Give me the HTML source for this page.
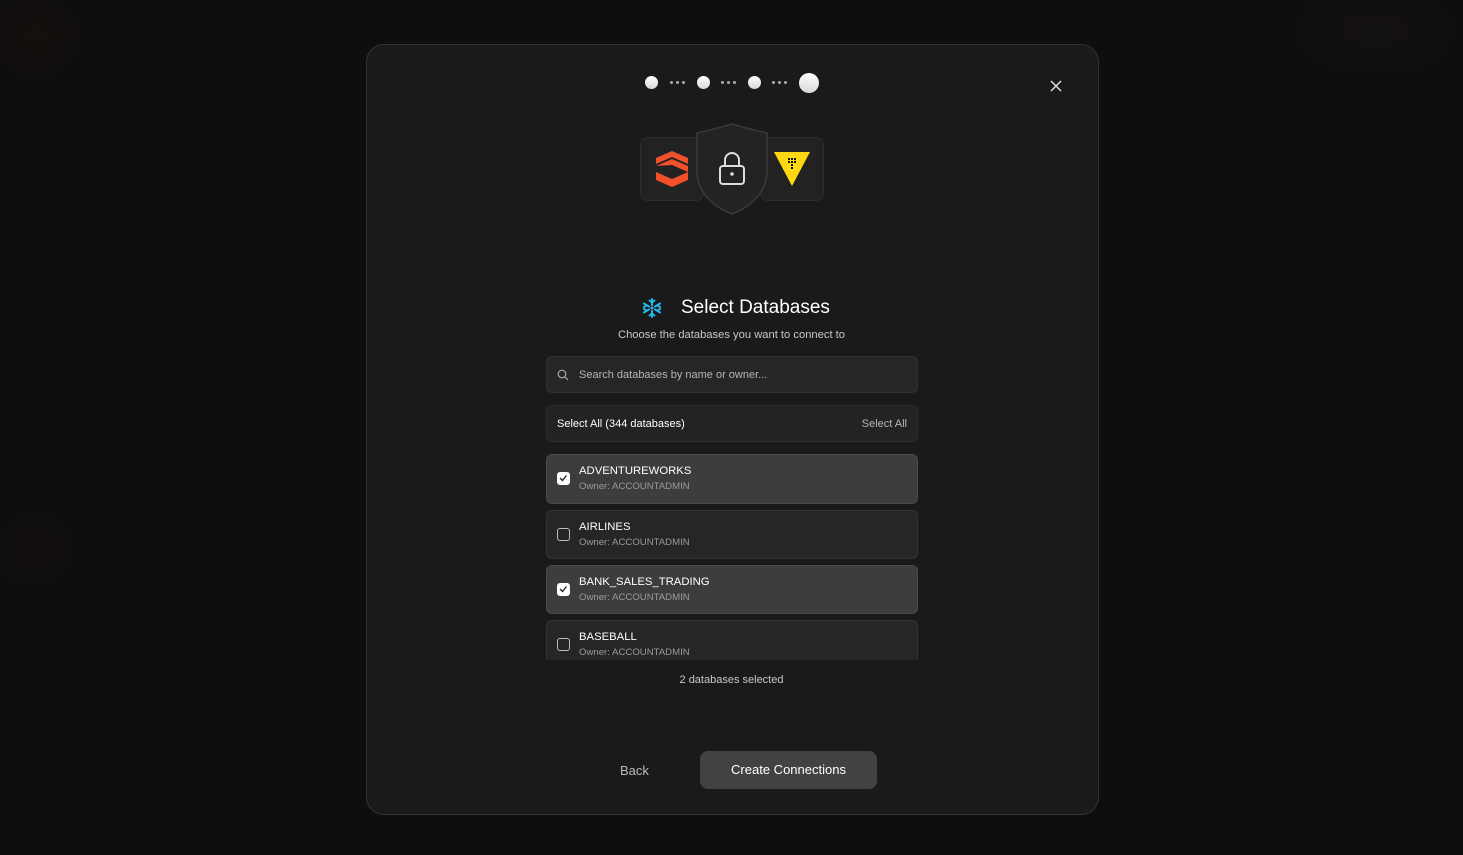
<!DOCTYPE html>
<html><head><style>
*{box-sizing:border-box;margin:0;padding:0}
body{width:1463px;height:855px;background:#0e0e0e;font-family:"Liberation Sans",sans-serif;position:relative;overflow:hidden;color:#fff}
.glow{position:absolute;border-radius:50%;filter:blur(25px);opacity:.5}
.modal{position:absolute;left:366px;top:44px;width:733px;height:771px;background:#1a1a1a;border:1px solid #333;border-radius:18px}
.dot{position:absolute;border-radius:50%;background:linear-gradient(#fff,#d8d8d8)}
.sd{position:absolute;width:3px;height:3px;border-radius:50%;background:#aaa}
.card{position:absolute;background:#222;border:1px solid #2e2e2e;border-radius:8px}
.row{position:absolute;left:546px;width:372px;border-radius:6px;border:1px solid #333}
.cb{position:absolute;left:10px;top:17px;width:13px;height:13px;border-radius:3px;border:1.5px solid #bbb}
.cb.on{background:#fff;border-color:#fff}
.nm{position:absolute;left:32px;top:10px;font-size:11.3px;color:#fff}
.ow{position:absolute;left:32px;top:26px;font-size:9.6px;color:#9a9a9a}
</style></head><body>
<div class="glow" style="left:10px;top:15px;width:50px;height:40px;background:#3a1a10"></div>
<div class="glow" style="left:1300px;top:10px;width:150px;height:40px;background:#221a16"></div>
<div class="glow" style="left:10px;top:530px;width:50px;height:40px;background:#2a1410"></div>
<div class="modal"></div>
<div class="dot" style="left:645px;top:76px;width:13px;height:13px"></div>
<div class="sd" style="left:670px;top:81px"></div><div class="sd" style="left:676px;top:81px"></div><div class="sd" style="left:682px;top:81px"></div>
<div class="dot" style="left:697px;top:76px;width:13px;height:13px"></div>
<div class="sd" style="left:721px;top:81px"></div><div class="sd" style="left:727px;top:81px"></div><div class="sd" style="left:733px;top:81px"></div>
<div class="dot" style="left:748px;top:76px;width:13px;height:13px"></div>
<div class="sd" style="left:772px;top:81px"></div><div class="sd" style="left:778px;top:81px"></div><div class="sd" style="left:784px;top:81px"></div>
<div class="dot" style="left:799px;top:73px;width:20px;height:20px"></div>
<svg style="position:absolute;left:1049px;top:79px" width="14" height="14"><path d="M2 2L12 12M12 2L2 12" stroke="#ddd" stroke-width="1.5"/></svg>
<div class="card" style="left:640px;top:137px;width:64px;height:64px"></div>
<svg style="position:absolute;left:655px;top:151px" width="34" height="36" viewBox="0 0 34 36"><g fill="#f0502a"><path d="M17 0L33 7V13L17 6L1 13V7Z"/><path d="M1 15L17 8L33 15V21L17 14Z"/><path d="M1 21L17 28L33 21V29L17 36L1 29Z"/></g></svg>
<div class="card" style="left:760px;top:137px;width:64px;height:64px"></div>
<svg style="position:absolute;left:774px;top:151px" width="36" height="36" viewBox="0 0 36 36"><path d="M0 1H36L18 35Z" fill="#ffd814"/><g fill="#111"><rect x="14" y="7" width="2" height="2"/><rect x="17" y="7" width="2" height="2"/><rect x="20" y="7" width="2" height="2"/><rect x="14" y="10" width="2" height="2"/><rect x="17" y="10" width="2" height="2"/><rect x="20" y="10" width="2" height="2"/><rect x="17" y="13" width="2" height="2"/><rect x="17" y="16" width="2" height="2"/></g></svg>
<svg style="position:absolute;left:695px;top:123px" width="74" height="92" viewBox="0 0 74 92"><path d="M37 1C50 5 60 7 72 10V48C72 70 55 84 37 91C19 84 2 70 2 48V10C14 7 24 5 37 1Z" fill="#232323" stroke="#3a3a3a" stroke-width="1.5"/><rect x="25" y="43" width="24" height="18" rx="3" fill="none" stroke="#ddd" stroke-width="2"/><path d="M30 43V37a7 7 0 0 1 14 0V43" fill="none" stroke="#ddd" stroke-width="2"/><circle cx="37" cy="51" r="1.8" fill="#ddd"/></svg>
<svg style="position:absolute;left:642px;top:298px" width="20" height="20" viewBox="0 0 20 20"><g stroke="#29b5e8" stroke-width="2" stroke-linecap="round" fill="none"><path d="M10 1V7M10 13V19M2 5.5L7 8.5M13 11.5L18 14.5M2 14.5L7 11.5M13 8.5L18 5.5"/><path d="M7.5 2.5L10 4.5L12.5 2.5M7.5 17.5L10 15.5L12.5 17.5M2 9L4.5 7.5M18 9L15.5 7.5M2 11L4.5 12.5M18 11L15.5 12.5"/></g><path d="M10 8L12 10L10 12L8 10Z" fill="#29b5e8"/></svg>
<div style="position:absolute;left:681px;top:297px;font-size:19px;color:#fff">Select Databases</div>
<div style="position:absolute;left:0;width:1463px;top:329px;text-align:center;font-size:11.2px;color:#c8c8c8">Choose the databases you want to connect to</div>
<div class="row" style="top:356px;height:37px;background:#262626;border-color:#303030"><svg style="position:absolute;left:10px;top:12px" width="12" height="12"><circle cx="5" cy="5" r="3.8" fill="none" stroke="#aaa" stroke-width="1.2"/><path d="M8 8L11 11" stroke="#aaa" stroke-width="1.2"/></svg><span style="position:absolute;left:32px;top:12px;font-size:11px;color:#b5b5b5">Search databases by name or owner...</span></div>
<div class="row" style="top:405px;height:37px;background:#232323;border-color:#2e2e2e"><span style="position:absolute;left:10px;top:12px;font-size:11px">Select All (344 databases)</span><span style="position:absolute;right:10px;top:12px;font-size:11px;color:#b5b5b5">Select All</span></div>
<div class="row" style="top:454px;height:50px;background:#3d3d3d;border-color:#4a4a4a"><div class="cb on"><svg width="10" height="10" style="position:absolute;left:0;top:0"><path d="M2 5L4.5 7.5L8.5 2.5" stroke="#222" stroke-width="1.3" fill="none"/></svg></div><div class="nm">ADVENTUREWORKS</div><div class="ow">Owner: ACCOUNTADMIN</div></div>
<div class="row" style="top:510px;height:49px;background:#262626"><div class="cb"></div><div class="nm">AIRLINES</div><div class="ow">Owner: ACCOUNTADMIN</div></div>
<div class="row" style="top:565px;height:49px;background:#3d3d3d;border-color:#4a4a4a"><div class="cb on"><svg width="10" height="10" style="position:absolute;left:0;top:0"><path d="M2 5L4.5 7.5L8.5 2.5" stroke="#222" stroke-width="1.3" fill="none"/></svg></div><div class="nm">BANK_SALES_TRADING</div><div class="ow">Owner: ACCOUNTADMIN</div></div>
<div class="row" style="top:620px;height:40px;background:#262626;border-bottom:none;border-radius:6px 6px 0 0;overflow:hidden"><div class="cb"></div><div class="nm">BASEBALL</div><div class="ow">Owner: ACCOUNTADMIN</div></div>
<div style="position:absolute;left:0;width:1463px;top:674px;text-align:center;font-size:11px;color:#c8c8c8">2 databases selected</div>
<div style="position:absolute;left:620px;top:763px;font-size:13px;color:#bbb">Back</div>
<div style="position:absolute;left:700px;top:751px;width:177px;height:38px;background:#424242;border-radius:8px;font-size:13px;text-align:center;line-height:38px">Create Connections</div>
</body></html>
